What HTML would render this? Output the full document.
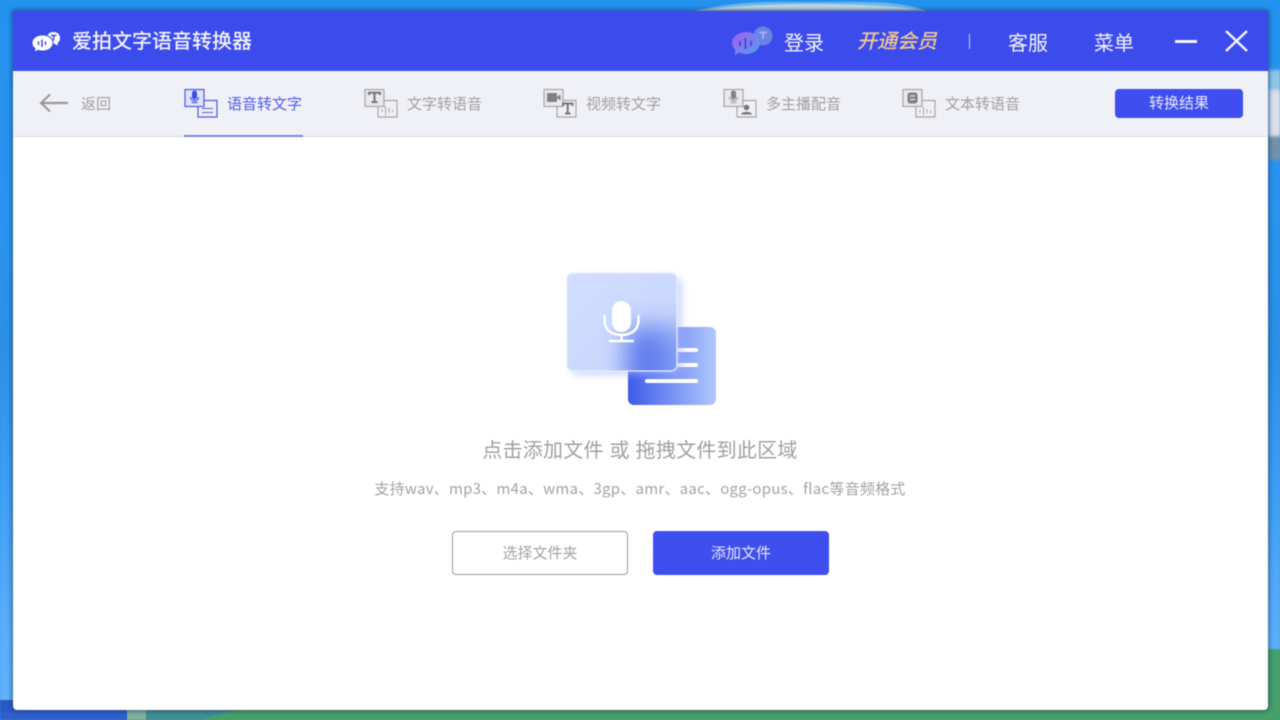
<!DOCTYPE html>
<html lang="zh">
<head>
<meta charset="utf-8">
<title>爱拍文字语音转换器</title>
<style>
html,body{margin:0;padding:0;width:1280px;height:720px;overflow:hidden}
html{background:#2f97ee}
#root{position:absolute;left:0;top:0;width:1280px;height:720px;overflow:hidden;filter:blur(.4px);font-family:"Liberation Sans","Noto Sans CJK SC",sans-serif}
.a{position:absolute;white-space:nowrap}
.bg{position:absolute;left:0;top:0;width:1280px;height:720px;background:linear-gradient(180deg,#2392ee 0,#2a94f0 30%,#2c8fe6 48%,#3a9cf2 65%,#5aaefa 88%,#62b2fb 100%)}
.win{position:absolute;left:13px;top:11px;width:1255px;height:699px;background:#fff;border-radius:0 0 4px 4px;box-shadow:0 0 5px 1px rgba(15,40,80,.6);overflow:hidden}
.title{position:absolute;left:13px;top:11px;width:1255px;height:60px;background:#3c4bec}
.bar{position:absolute;left:13px;top:71px;width:1255px;height:65px;background:#f0f1f7;border-bottom:1px solid #dedede}
.t20{font-size:20px;line-height:28px;color:#f4f5ff}
.tab{font-size:15px;line-height:20px;color:#a0a0a0;top:95px}
svg{position:absolute;overflow:visible}
</style>
</head>
<body>
<div id="root">
<div class="bg"></div>
<svg style="left:0;top:0" width="1280" height="720" viewBox="0 0 1280 720">
<defs><filter id="sb"><feGaussianBlur stdDeviation="1.500"/></filter></defs>
<path d="M694 11C720 5 745 2 775 2H860C890 2 912 5 927 11Z" fill="#6fb6ea"/>
<path d="M694 11C730 6 770 4 810 4C860 4 900 6 927 11Z" fill="#bcd9e8"/>
<path d="M694 11H927L922 9.500H700Z" fill="#9fb4c8"/>
<path d="M0 700H50V720H0Z" fill="#2859c8"/>
<path d="M50 710H127V720H0V712Z" fill="#2f5fca"/>
<rect x="127" y="708" width="19" height="12" fill="#7fb09c"/>
<path d="M146 708H1268V649H1280V720H146Z" fill="#46a06b"/>
<path d="M146 708H240L200 720H146Z" fill="#3f8f92"/>
<g filter="url(#sb)">
<path d="M1268 70H1282V92H1268Z" fill="#8fc4e6"/>
<path d="M1268 90H1282V138H1268Z" fill="#d9dfee"/>
<path d="M1268 136H1282V160H1268Z" fill="#6f93a8"/>
</g>
</svg>
<div class="win"></div>
<div class="title"></div>
<div class="bar"></div>

<!-- logo -->
<svg style="left:30px;top:30px" width="32" height="24" viewBox="0 0 32 24">
<path d="M23.500 2C27.500 2 30 4.500 30 8C30 10.500 29 12 27.500 13L28 15.500L24 13.800C20 13.800 17 11.500 17 8C17 4.500 19.500 2 23.500 2Z" fill="#fff"/>
<path d="M12.500 5C19 5 23 8.500 23 13C23 17.500 19 21 12.500 21C11 21 9.500 20.800 8.500 20.300L4 22L5 18.500C3 17.200 2 15.200 2 13C2 8.500 6 5 12.500 5Z" fill="#fff" stroke="#3c4bec" stroke-width="1"/>
<path d="M8.500 11.500V15M12 9.500V17M15.500 11.500V15" stroke="#3c4bec" stroke-width="1.500"/>
<path d="M21 5.500H26.500M23.700 5.500V10.500" stroke="#3c4bec" stroke-width="1.400"/>
</svg>
<div class="a t20" style="left:72px;top:28px;font-weight:500">爱拍文字语音转换器</div>

<!-- top right -->
<svg style="left:730px;top:26px" width="44" height="30" viewBox="0 0 44 30">
<defs><linearGradient id="g1" x1="0" y1="0" x2="1" y2="1"><stop offset="0" stop-color="#a45df0"/><stop offset="1" stop-color="#4fa0f0"/></linearGradient></defs>
<circle cx="33" cy="10" r="9.500" fill="#6a84e4"/>
<path d="M29 6.500H37M33 6.500V13" stroke="#a9b9f3" stroke-width="1.600"/>
<path d="M16 6C25 6 30 11 30 17C30 23 24 28 16 28C13 28 11 27.500 9 26.500L5 29.500L5 23.500C3 21.500 2 19.500 2 17C2 11 8 6 16 6Z" fill="url(#g1)"/>
<path d="M10 15V20M15.500 12V23M21 15V20" stroke="#4a3fd6" stroke-width="1.800"/>
</svg>
<div class="a t20" style="left:784px;top:30px">登录</div>
<div class="a t20" style="left:857px;top:28px;color:#f0c992;font-style:italic;font-weight:500">开通会员</div>
<div class="a" style="left:969px;top:34px;width:1px;height:15px;background:#c8ccf6"></div>
<div class="a t20" style="left:1008px;top:30px">客服</div>
<div class="a t20" style="left:1094px;top:30px">菜单</div>
<div class="a" style="left:1175px;top:40px;width:22px;height:2.500px;background:#f4f5ff"></div>
<svg style="left:1225px;top:30px" width="23" height="22" viewBox="0 0 23 22"><path d="M1 1L22 21M22 1L1 21" stroke="#f4f5ff" stroke-width="2.400" fill="none"/></svg>

<!-- back -->
<svg style="left:39px;top:93px" width="30" height="20" viewBox="0 0 30 20"><path d="M29 10H2M11 1.500L2 10L11 18.500" stroke="#9a9a9a" stroke-width="2.200" fill="none"/></svg>
<div class="a tab" style="left:81px">返回</div>

<!-- tab 1 -->
<svg style="left:184px;top:88px" width="34" height="30" viewBox="0 0 34 30" fill="none" stroke="#4a59e6" stroke-width="1.200">
<rect x="1" y="1.500" width="19" height="17" fill="#dfe3fb"/>
<path d="M8 5a2.500 2.500 0 0 1 5 0v4a2.500 2.500 0 0 1-5 0z" fill="#3c4bec" stroke="none"/>
<path d="M6.500 9c0 5 8 5 8 0M7.500 14.500H13.500"/>
<path d="M20 12.500H33V29H14V18.500"/>
<path d="M18 20.500H29M18 24.500H29" stroke-width="1.100"/>
</svg>
<div class="a tab" style="left:227px;color:#4f5de6">语音转文字</div>
<div class="a" style="left:184px;top:135px;width:119px;height:2px;background:#7a86ea"></div>

<!-- tab 2 -->
<svg style="left:364px;top:88px" width="34" height="30" viewBox="0 0 34 30" fill="none" stroke="#a6a6a6" stroke-width="1.200">
<rect x="1" y="1.500" width="19" height="17" fill="#e9e9ee"/>
<path d="M5 7V4.800H16V7M10.500 4.800V14M7.500 14H13.500" stroke="#777" stroke-width="2"/>
<path d="M20 12.500H33V29H14V18.500"/>
<path d="M18 21V24M21.500 18V27M25 20V25M28.500 21.500V24" stroke-width="1"/>
</svg>
<div class="a tab" style="left:407px">文字转语音</div>

<!-- tab 3 -->
<svg style="left:543px;top:88px" width="34" height="30" viewBox="0 0 34 30" fill="none" stroke="#a6a6a6" stroke-width="1.200">
<rect x="1" y="1.500" width="19" height="17" fill="#e9e9ee"/>
<rect x="4" y="5" width="10" height="9" rx="1" fill="#808080" stroke="none"/>
<path d="M14 9L17.500 6.500V12.500L14 10Z" fill="#808080" stroke="none"/>
<path d="M20 12.500H33V29H14V18.500"/>
<path d="M20 18V15.500H29.500V18M24.700 15.500V25.500M22 25.500H27.500" stroke="#777" stroke-width="2"/>
</svg>
<div class="a tab" style="left:586px">视频转文字</div>

<!-- tab 4 -->
<svg style="left:723px;top:88px" width="34" height="30" viewBox="0 0 34 30" fill="none" stroke="#a6a6a6" stroke-width="1.200">
<rect x="1" y="1.500" width="19" height="17" fill="#e9e9ee"/>
<path d="M8 5a2.500 2.500 0 0 1 5 0v4a2.500 2.500 0 0 1-5 0z" fill="#808080" stroke="none"/>
<path d="M6.500 9c0 5 8 5 8 0M7.500 14.500H13.500"/>
<path d="M20 12.500H33V29H14V18.500"/>
<circle cx="23.500" cy="19.500" r="2.800" fill="#777" stroke="none"/>
<path d="M18 26.500C18.500 23 28.500 23 29 26.500Z" fill="#777" stroke="none"/>
</svg>
<div class="a tab" style="left:766px">多主播配音</div>

<!-- tab 5 -->
<svg style="left:902px;top:88px" width="34" height="30" viewBox="0 0 34 30" fill="none" stroke="#a6a6a6" stroke-width="1.200">
<rect x="1" y="1.500" width="19" height="17" fill="#e9e9ee"/>
<rect x="5.500" y="4.500" width="10" height="11" rx="2.500" fill="#808080" stroke="none"/>
<path d="M8 8H13M8 11.500H13" stroke="#e9e9ee" stroke-width="1.200"/>
<path d="M20 12.500H33V29H14V18.500"/>
<path d="M18 22V25M21.500 19V27M25 21V25.500M28.500 22.500V25" stroke-width="1"/>
</svg>
<div class="a tab" style="left:945px">文本转语音</div>

<!-- result button -->
<div class="a" style="left:1115px;top:89px;width:128px;height:29px;background:#3e4eef;border-radius:4px;color:#e8eafd;font-size:15px;line-height:30px;text-align:center">转换结果</div>

<!-- illustration -->
<svg style="left:550px;top:260px" width="180" height="155" viewBox="0 0 180 155">
<defs>
<linearGradient id="doc" x1="0" y1="0.500" x2="1" y2="0.500"><stop offset="0" stop-color="#3c5ce8"/><stop offset="1" stop-color="#b2c8fd"/></linearGradient>
<linearGradient id="card" x1="0" y1="0" x2="1" y2="1"><stop offset="0" stop-color="#d2defe"/><stop offset="1" stop-color="#c6d5fd"/></linearGradient>
<filter id="bl" x="-30%" y="-30%" width="160%" height="160%"><feGaussianBlur stdDeviation="4"/></filter>
<filter id="bl2" x="-60%" y="-60%" width="220%" height="220%"><feGaussianBlur stdDeviation="13"/></filter>
<clipPath id="c"><rect x="17" y="13" width="110" height="98" rx="6"/></clipPath>
</defs>
<rect x="78" y="67" width="88" height="78" rx="6" fill="url(#doc)"/>
<path d="M128 90H146M128 105H146M97 121H146" stroke="#fff" stroke-width="4" stroke-linecap="round"/>
<rect x="22" y="18" width="110" height="97" rx="6" fill="#a9b6fa" opacity=".55" filter="url(#bl)"/>
<rect x="17" y="13" width="110" height="98" rx="6" fill="url(#card)"/>
<g clip-path="url(#c)"><rect x="78" y="67" width="88" height="78" rx="6" fill="url(#doc)" opacity=".95" filter="url(#bl2)"/></g>
<rect x="17" y="13" width="110" height="98" rx="6" fill="none" stroke="#e8eeff" stroke-width="1.200"/>
<rect x="62" y="41" width="19" height="31" rx="9.500" fill="#fff"/>
<path d="M54.500 56V60C54.500 70 62 75 71.500 75C81 75 88.500 70 88.500 60V56M71.500 75V81M60 81H83" stroke="#fff" stroke-width="2.500" fill="none" stroke-linecap="round"/>
</svg>

<!-- text -->
<div class="a" style="left:440px;top:439px;font-size:20px;letter-spacing:.25px;line-height:24px;color:#a0a0a0;width:400px;text-align:center">点击添加文件 或 拖拽文件到此区域</div>
<div class="a" style="left:340px;top:479px;width:600px;text-align:center;font-family:'Noto Sans CJK SC','Liberation Sans',sans-serif;font-size:15px;letter-spacing:.245px;line-height:20px;color:#a3a3a3">支持wav、mp3、m4a、wma、3gp、amr、aac、ogg-opus、flac等音频格式</div>

<!-- buttons -->
<div class="a" style="left:452px;top:531px;width:176px;height:44px;box-sizing:border-box;border:1px solid #9a9a9a;border-radius:4px;background:#fff;color:#a3a3a3;font-size:15px;line-height:43px;text-align:center">选择文件夹</div>
<div class="a" style="left:653px;top:531px;width:176px;height:44px;border-radius:4px;background:#3e4eef;color:#e8eafd;font-size:15px;line-height:45px;text-align:center">添加文件</div>
</div>
</body>
</html>
